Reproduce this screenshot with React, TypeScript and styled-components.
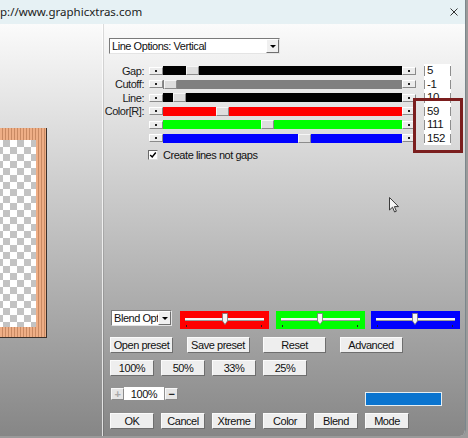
import React from 'react';
import styled, { createGlobalStyle } from 'styled-components';

const GlobalStyle = createGlobalStyle`
  html, body {
    margin: 0;
    padding: 0;
  }
  body {
    width: 468px;
    height: 438px;
    overflow: hidden;
    background: #9a9a9a;
    font-family: "Liberation Sans", Arial, sans-serif;
    font-size: 11px;
    letter-spacing: -0.45px;
    color: #111;
  }
  * {
    box-sizing: border-box;
  }
`;

type SliderRow = { label: string; color: string; thumb: number; value: string };

const sliderRows: SliderRow[] = [
  { label: 'Gap:', color: '#000', thumb: 23, value: '5' },
  { label: 'Cutoff:', color: '#808080', thumb: 1, value: '-1' },
  { label: 'Line:', color: '#000', thumb: 10, value: '10' },
  { label: 'Color[R]:', color: '#ff0000', thumb: 53, value: '59' },
  { label: '', color: '#00ff00', thumb: 98, value: '111' },
  { label: '', color: '#0000ff', thumb: 135, value: '152' },
];

const blendBoxes = [
  { color: '#ff0000', thumb: 42 },
  { color: '#00ff00', thumb: 41 },
  { color: '#0000ff', thumb: 41 },
];

const App = () => {
  return (
    <>
      <GlobalStyle />
      <Window>
        <TitleBar>
          <Title>p://www.graphicxtras.com</Title>
          <Close viewBox="0 0 8 8">
            <path d="M0.5 0.5 L7.5 7.5 M7.5 0.5 L0.5 7.5" />
          </Close>
        </TitleBar>
        <Body>
          <LeftPanel>
            <Frame>
              <Checker />
            </Frame>
          </LeftPanel>
          <Main>
            <Select $width={171}>
              <span>Line Options: Vertical</span>
              <SelectArrow>
                <i />
              </SelectArrow>
            </Select>

            <SliderGrid>
              {sliderRows.map((row, i) => (
                <React.Fragment key={i}>
                  <Label>{row.label}</Label>
                  <Slider>
                    <ArrowButton>
                      <b />
                    </ArrowButton>
                    <Track $color={row.color}>
                      <Thumb style={{ left: row.thumb }} />
                    </Track>
                    <ArrowButton>
                      <b />
                    </ArrowButton>
                  </Slider>
                  <NumberCell>{row.value}</NumberCell>
                </React.Fragment>
              ))}
            </SliderGrid>

            <CheckRow>
              <CheckBox>
                <svg viewBox="0 0 10 10" width="8" height="8">
                  <path d="M1.5 5 L4 7.5 L8.5 1.8" />
                </svg>
              </CheckBox>
              <span>Create lines not gaps</span>
            </CheckRow>

            <BlendRow>
              <Select $width={61}>
                <span>Blend Options</span>
                <SelectArrow>
                  <i />
                </SelectArrow>
              </Select>
              <BlendBoxes>
                {blendBoxes.map((b, i) => (
                  <BlendBox key={i} $color={b.color}>
                    <BlendTrack />
                    <BlendThumb viewBox="0 0 6 12" style={{ left: b.thumb }}>
                      <path d="M0.5 0.5 H5.5 V8 L3 11.5 L0.5 8 Z" />
                    </BlendThumb>
                    <Tick $side="left" />
                    <Tick $side="right" />
                  </BlendBox>
                ))}
              </BlendBoxes>
            </BlendRow>

            <ButtonRow $gap={13.5} $top={8}>
              <Button $width={63}>Open preset</Button>
              <Button $width={63}>Save preset</Button>
              <Button $width={63}>Reset</Button>
              <Button $width={63}>Advanced</Button>
            </ButtonRow>

            <ButtonRow $gap={7} $top={7}>
              <Button $width={44}>100%</Button>
              <Button $width={44}>50%</Button>
              <Button $width={44}>33%</Button>
              <Button $width={44}>25%</Button>
            </ButtonRow>

            <ZoomRow>
              <ZoomControls>
                <SmallButton $dim>+</SmallButton>
                <ZoomField>100%</ZoomField>
                <SmallButton>−</SmallButton>
              </ZoomControls>
              <Swatch />
            </ZoomRow>

            <ButtonRow $gap={7} $top={7}>
              <Button $width={44}>OK</Button>
              <Button $width={44}>Cancel</Button>
              <Button $width={44}>Xtreme</Button>
              <Button $width={44}>Color</Button>
              <Button $width={44}>Blend</Button>
              <Button $width={44}>Mode</Button>
            </ButtonRow>
          </Main>
        </Body>
        <Highlight />
        <Cursor viewBox="0 0 11 17">
          <path d="M0.5 0.5 L0.5 13 L3.5 10.2 L5.6 15 L7.4 14.2 L5.4 9.6 L9.5 9.6 Z" />
        </Cursor>
      </Window>
    </>
  );
};

export default App;

const Window = styled.div`
  position: relative;
  width: 466px;
  height: 436px;
  display: flex;
  flex-direction: column;
  border-right: 1px solid #7b878c;
  border-bottom-right-radius: 6px;
  overflow: hidden;
  background: #fbfbfb;
`;

const TitleBar = styled.div`
  display: flex;
  justify-content: space-between;
  align-items: center;
  height: 24px;
  padding: 0 7px 1px 0;
  background-color: #e6f1f4;
  flex-shrink: 0;
`;

const Title = styled.span`
  font-family: "Noto Sans", "Open Sans", sans-serif;
  font-size: 11.5px;
  letter-spacing: 0;
  color: #1b1b1b;
  white-space: nowrap;
`;

const Close = styled.svg`
  width: 8px;
  height: 8px;
  fill: none;
  stroke: #333;
  stroke-width: 1;
`;

const Body = styled.div`
  flex: 1;
  display: flex;
  background: linear-gradient(#fbfbfb, #868686);
`;

const LeftPanel = styled.div`
  width: 103px;
  flex-shrink: 0;
  padding-top: 104px;
  overflow: hidden;
  border-right: 1px solid rgba(255, 255, 255, 0.75);
  box-shadow: 1px 0 0 rgba(0, 0, 0, 0.12);
`;

const Frame = styled.div`
  width: 68px;
  height: 210px;
  margin-left: -21px;
  padding: 12px 10px 10px 0;
  border-right: 1px solid #3a302a;
  border-bottom: 1px solid #3a302a;
  background: repeating-linear-gradient(90deg, #eeae86 0 2px, #c98a63 2px 3px);
`;

const Checker = styled.div`
  width: 100%;
  height: 100%;
  background-color: #ffffff;
  background-image: conic-gradient(
    #c3c3c3 25%,
    transparent 0 50%,
    #c3c3c3 0 75%,
    transparent 0
  );
  background-size: 14px 14px;
  background-position: 3px 0;
`;

const Main = styled.div`
  flex: 1;
  display: flex;
  flex-direction: column;
  padding: 14px 0 0 6px;
`;

const Select = styled.div<{ $width: number }>`
  display: flex;
  align-items: center;
  justify-content: space-between;
  width: ${({ $width }) => $width}px;
  height: 16px;
  padding-left: 2px;
  background: #fff;
  border: 1px solid;
  border-color: #7a7a7a #e4e4e4 #e4e4e4 #7a7a7a;
  overflow: hidden;

  > span {
    flex: 1;
    overflow: hidden;
    white-space: nowrap;
  }
`;

const SelectArrow = styled.div`
  display: flex;
  justify-content: center;
  align-items: center;
  width: 13px;
  height: 14px;
  flex-shrink: 0;
  background: #f0f0f0;
  border: 1px solid;
  border-color: #fff #6f6f6f #6f6f6f #fff;

  > i {
    width: 0;
    height: 0;
    border-left: 3px solid transparent;
    border-right: 3px solid transparent;
    border-top: 3px solid #000;
  }
`;

const SliderGrid = styled.div`
  display: grid;
  grid-template-columns: 36px 267px 30px;
  grid-auto-rows: 13.5px;
  column-gap: 5px;
  margin: 10px 0 0 -1px;
  align-items: center;
`;

const Label = styled.div`
  display: flex;
  justify-content: flex-end;
  white-space: nowrap;
  color: #1a1a1a;
`;

const Slider = styled.div`
  display: flex;
  align-items: center;
  height: 9px;
`;

const ArrowButton = styled.div`
  display: flex;
  justify-content: center;
  align-items: center;
  width: 14px;
  height: 8px;
  flex-shrink: 0;
  background: #ececec;
  border: 1px solid;
  border-color: #fff #8a8a8a #8a8a8a #fff;

  > b {
    width: 2px;
    height: 2px;
    background: #222;
  }
`;

const Track = styled.div<{ $color: string }>`
  position: relative;
  flex: 1;
  height: 9px;
  background: ${({ $color }) => $color};
`;

const Thumb = styled.div`
  position: absolute;
  top: 0;
  width: 13px;
  height: 9px;
  background: #dedede;
  border: 1px solid;
  border-color: #f6f6f6 #8c8c8c #8c8c8c #f6f6f6;
`;

const NumberCell = styled.div`
  position: relative;
  height: 13.5px;
  margin-left: 3px;
  padding-left: 3px;
  background: #fff;
  font-size: 11.5px;
  line-height: 13px;

  &::before,
  &::after {
    content: '';
    position: absolute;
    top: 2px;
    bottom: 2px;
    width: 1px;
    background: #8e8e8e;
  }
  &::before {
    left: 0;
  }
  &::after {
    right: 0;
  }
`;

const CheckRow = styled.div`
  display: flex;
  align-items: center;
  gap: 5px;
  height: 11px;
  margin: 4px 0 0 39px;
`;

const CheckBox = styled.div`
  display: flex;
  justify-content: center;
  align-items: center;
  width: 10px;
  height: 10px;
  background: #fff;
  border: 1px solid;
  border-color: #6a6a6a #e0e0e0 #e0e0e0 #6a6a6a;

  svg {
    fill: none;
    stroke: #000;
    stroke-width: 1.8;
  }
`;

const BlendRow = styled.div`
  display: flex;
  align-items: flex-start;
  margin: 150px 0 0 2px;
  height: 19px;
`;

const BlendBoxes = styled.div`
  display: flex;
  gap: 6.5px;
  margin: 1px 0 0 8px;
`;

const BlendBox = styled.div<{ $color: string }>`
  position: relative;
  width: 89px;
  height: 18px;
  background: ${({ $color }) => $color};
`;

const BlendTrack = styled.div`
  position: absolute;
  left: 5px;
  right: 5px;
  top: 7px;
  height: 3px;
  background: #f4f4f4;
  border-bottom: 1px solid #9a9a9a;
`;

const BlendThumb = styled.svg`
  position: absolute;
  top: 2px;
  width: 6px;
  height: 12px;
  fill: #f6f6f6;
  stroke: #777;
  stroke-width: 0.8;
`;

const Tick = styled.div<{ $side: 'left' | 'right' }>`
  position: absolute;
  bottom: 2px;
  ${({ $side }) => ($side === 'left' ? 'left: 6px;' : 'right: 7px;')}
  width: 1px;
  height: 2px;
  background: #222;
`;

const ButtonRow = styled.div<{ $gap: number; $top: number }>`
  display: flex;
  gap: ${({ $gap }) => $gap}px;
  margin-top: ${({ $top }) => $top}px;
  margin-left: 1px;
`;

const Button = styled.div<{ $width: number }>`
  display: flex;
  justify-content: center;
  align-items: center;
  width: ${({ $width }) => $width}px;
  height: 16px;
  background: #eeeeee;
  border: 1px solid;
  border-color: #fbfbfb #6e6e6e #6e6e6e #fbfbfb;
  color: #111;
  white-space: nowrap;
`;

const ZoomRow = styled.div`
  display: flex;
  align-items: flex-start;
  margin-top: 11px;
  height: 19px;
`;

const ZoomControls = styled.div`
  display: flex;
  align-items: center;
  margin-left: 2px;
`;

const SmallButton = styled.div<{ $dim?: boolean }>`
  display: flex;
  justify-content: center;
  align-items: center;
  width: 13px;
  height: 12px;
  background: #e6e6e6;
  border: 1px solid;
  border-color: #f8f8f8 #8a8a8a #8a8a8a #f8f8f8;
  font-size: 11px;
  font-weight: bold;
  color: ${({ $dim }) => ($dim ? '#a8a8a8' : '#222')};
`;

const ZoomField = styled.div`
  display: flex;
  justify-content: center;
  align-items: center;
  width: 40px;
  height: 13px;
  margin-right: 1px;
  background: #fff;
`;

const Swatch = styled.div`
  width: 77px;
  height: 14px;
  margin: 5px 0 0 187px;
  background: #0a74cf;
  border: 1px solid #e6eef2;
`;

const Highlight = styled.div`
  position: absolute;
  left: 413px;
  top: 98px;
  width: 50px;
  height: 55px;
  border: 3px solid #7b1e1e;
`;

const Cursor = styled.svg`
  position: absolute;
  left: 389px;
  top: 197px;
  width: 11px;
  height: 17px;
  fill: #fff;
  stroke: #222;
  stroke-width: 1;
  opacity: 0.85;
`;
